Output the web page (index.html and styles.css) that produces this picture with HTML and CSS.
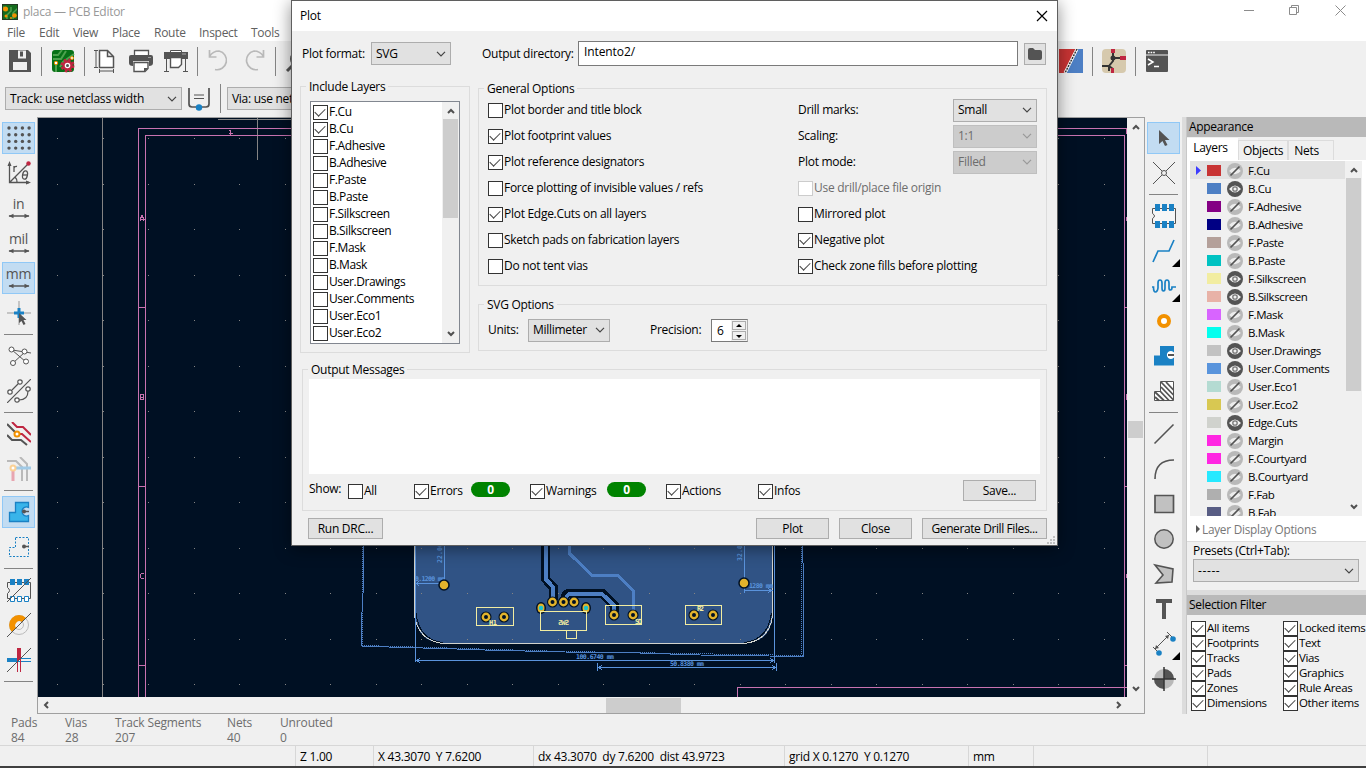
FILE: index.html
```html
<!DOCTYPE html>
<html lang="en">
<head>
<meta charset="utf-8">
<title>placa — PCB Editor</title>
<link rel="stylesheet" href="styles.css">
</head>
<body>
<svg class="defs" width="0" height="0">
  <symbol id="chev" viewBox="0 0 10 6"><path d="M1 .8 5 4.8 9 .8" fill="none" stroke="currentColor" stroke-width="1.2"/></symbol>
  <symbol id="arr" viewBox="0 0 8 6"><path d="M1 5 4 2 7 5" fill="none" stroke="#505050" stroke-width="2"/></symbol>
  <symbol id="eye" viewBox="0 0 16 16"><circle cx="8" cy="8" r="8" fill="#545454"/><path d="M2 8Q8 1 14 8 8 15 2 8Z" fill="#f0f0f0"/><circle cx="8" cy="8" r="2.2" fill="none" stroke="#777" stroke-width="1.3"/></symbol>
  <symbol id="noeye" viewBox="0 0 16 16"><circle cx="8" cy="8" r="8" fill="#b9b9b9"/><path d="M2.2 8Q8 1.5 13.8 8 8 14.500 2.200 8Z" fill="#ededed"/><path d="M3.500 12.500 12.500 3.500" stroke="#545454" stroke-width="1.7"/></symbol>
  <symbol id="dblarrow" viewBox="0 0 24 6"><path d="M1 3h22" stroke="#545454" stroke-width="1.6"/><path d="M1 3 6 .5v5ZM23 3 18 .5v5Z" fill="#545454"/></symbol>
</svg>
<div class="app">
  <header class="titlebar">
    <svg class="appicon" viewBox="0 0 16 16"><rect width="16" height="16" rx="1" fill="#146b1d"/><path d="M5 16V11L9 7V3M16 4 11 9V16M1 3 6 5" stroke="#4da24e" stroke-width="1.500" fill="none"/><g fill="#f29100"><circle cx="3.500" cy="5" r="2.500"/><circle cx="4" cy="12" r="1.500"/><circle cx="12.500" cy="11.500" r="2.300"/><circle cx="9" cy="14" r="1"/></g><rect x=".5" y=".5" width="15" height="15" fill="none" stroke="#233a23"/></svg>
    <span class="apptitle">placa — PCB Editor</span>
    <svg class="winctl" viewBox="0 0 104 14" fill="none" stroke="#8c8c8c"><path d="M1 7.500h10M46.500 4.500h7v7h-7zM48.500 4.500v-2h7v7h-2M92.500 2.500l10 10M102.500 2.500l-10 10"/></svg>
  </header>
  <nav class="menubar"><span>File</span><span>Edit</span><span>View</span><span>Place</span><span>Route</span><span>Inspect</span><span>Tools</span></nav>

  <div class="toolbar">
    <div class="tb"><svg viewBox="0 0 24 24"><path d="M1 1h19l3 3v19H1Z" fill="#545454"/><path d="M10 1.500h8v8h-8zM5 13h14v8H5z" fill="#f0f0f0"/><path d="M12 2.500h3v5h-3z" fill="#545454"/></svg></div>
    <i class="vsep"></i>
    <div class="tb"><svg viewBox="0 0 24 24"><rect x="1" y="1" width="22" height="22" rx="3" fill="#077117"/><path d="M2 6h5l4-5M2 10h8l5-8M9 18l3-5 11-8M5 14v9" stroke="#4da24e" stroke-width="2" fill="none"/><circle cx="5" cy="14" r="1.700" fill="#fff" stroke="#f29100"/><circle cx="21" cy="9" r="1.500" fill="#fff" stroke="#f29100"/><circle cx="16.500" cy="16.500" r="5.500" fill="none" stroke="#bf2641" stroke-width="3" stroke-dasharray="2.400 1.920"/><circle cx="16.500" cy="16.500" r="4" fill="#fff" stroke="#bf2641" stroke-width="2.400"/><circle cx="16.500" cy="16.500" r="1.500" fill="#545454"/></svg></div>
    <i class="vsep"></i>
    <div class="tb"><svg viewBox="0 0 24 24" fill="none" stroke="#545454"><path d="M5.500 1.500h8l6 6v11h-14zM13.500 1.500v6h6" fill="#fff" stroke-width="1.500"/><path d="M0 1.500h4M0 18.500h4M2 2v16M5.500 20v4M19.500 20v4M6 22h13"/></svg></div>
    <div class="tb"><svg viewBox="0 0 24 24"><path d="M5.500 6V1.500h14V6" fill="#fff" stroke="#545454" stroke-width="1.300"/><path d="M2 6h20q2 0 2 2v6q0 3-4 3V12H4v5Q0 17 0 14V8q0-2 2-2Z" fill="#545454"/><path d="M5 13.500h14v6l-3 3H5z" fill="#fff" stroke="#545454" stroke-width="1.400"/><path d="M15 23v-4h4" fill="#545454"/><path d="M19 8.500h3" stroke="#999"/></svg></div>
    <div class="tb"><svg viewBox="0 0 24 24"><path d="M6.500 4V1.500h11V4" fill="#fff" stroke="#545454"/><path d="M0 3h24v7H0z" fill="#545454"/><path d="M18 5h4" stroke="#aaa"/><path d="M2.500 10v12M21.500 10v12M0 22.500h5M19 22.500h5" stroke="#545454"/><path d="M6.500 8.500h11v7l-3 3h-8z" fill="#fff" stroke="#545454" stroke-width="1.400"/></svg></div>
    <i class="vsep"></i>
    <div class="tb"><svg viewBox="0 0 24 24" fill="none" stroke="#b9b9b9" stroke-width="1.700"><path d="M2.500 1v7h7M2.500 7.500Q6 2 12 2a9 9 0 1 1-4 18.500"/></svg></div>
    <div class="tb"><svg viewBox="0 0 24 24" fill="none" stroke="#b9b9b9" stroke-width="1.700"><path d="M21.500 1v7h-7M21.500 7.500Q18 2 12 2a9 9 0 1 0 4 18.500"/></svg></div>
    <i class="vsep"></i>
    <div class="tb"><svg viewBox="0 0 24 24" fill="none" stroke="#545454"><circle cx="14" cy="10" r="8" stroke-width="2"/><path d="M8 16l-6 6" stroke-width="3"/></svg></div>
    <span class="grow"></span>
    <div class="tb"><svg viewBox="0 0 24 24"><path d="M0 0h24v24H0z" fill="#4d7fc4"/><path d="M0 0h18L6 24H0z" fill="#c83434"/><path d="M18 0 6 24" stroke="#fff" stroke-width="3"/><path d="M18 0 6 24" stroke="#333" stroke-width="1.500" stroke-dasharray="2 1"/></svg></div>
    <i class="vsep"></i>
    <div class="tb"><svg viewBox="0 0 24 24"><rect width="24" height="24" rx="4" fill="#d6c9ad"/><path d="M11 2v10L7 17v5M11 9h8M0 17h7M7 17l4 3" stroke="#333" stroke-width="2" fill="none"/><circle cx="11" cy="9" r="2.500" fill="#333"/><path d="M9 0h4v4H9zM18 7h6v4h-6zM9 19h3v5H9z" fill="#bf2641"/></svg></div>
    <i class="vsep"></i>
    <div class="tb"><svg viewBox="0 0 24 24"><rect x="1" y="1" width="22" height="22" rx="1" fill="#545454"/><path d="M1 6h22" stroke="#f0f0f0"/><path d="M3 3.500h7" stroke="#fff" stroke-width="1.600" stroke-dasharray="1.600 1"/><path d="M3 10l5 3-5 3M9 17.500h5" fill="none" stroke="#fff" stroke-width="1.500"/></svg></div>
  </div>
  <div class="toolbar2">
    <div class="select track"><span>Track: use netclass width</span><svg><use href="#chev"/></svg></div>
    <svg class="tw" viewBox="0 0 24 24"><path d="M2 1v16q0 3 3 3h14q3 0 3-3V1" fill="none" stroke="#545454" stroke-width="1.700"/><path d="M7 8h10M7 11.500h10" stroke="#545454" stroke-width="1.200"/><circle cx="12" cy="20.500" r="3.200" fill="#1a81c4"/></svg>
    <i class="vsep"></i>
    <div class="select via"><span>Via: use net</span></div>
  </div>

  <main class="work">
    <aside class="side">
      <div class="tb on"><svg viewBox="0 0 24 24" id="gridicon"></svg></div>
      <div class="tb"><svg viewBox="0 0 24 24" fill="none" stroke="#545454" stroke-width="1.300"><path d="M2.500 3v18.500H22M2.500 21.500 21 3M8 16q2 2 2 5"/><path d="M.5 5 2.500 0l2 5zM19 19.500l5 2-5 2z" fill="#545454" stroke="none"/><circle cx="21.500" cy="2.500" r="2.200" fill="#bf2641" stroke="none"/><path d="M7 11V5M7 7q1-2 3-1.500"/><ellipse cx="18" cy="14" rx="2.400" ry="4.200" transform="rotate(12 18 14)"/><path d="M15.500 14h5"/></svg></div>
      <div class="tb unit"><b>in</b><svg><use href="#dblarrow"/></svg></div>
      <div class="tb unit"><b>mil</b><svg><use href="#dblarrow"/></svg></div>
      <div class="tb unit on"><b>mm</b><svg><use href="#dblarrow"/></svg></div>
      <div class="tb"><svg viewBox="0 0 24 24"><path d="M12 0v24M0 12h24" stroke="#999"/><path d="M12 7v10M7 12h10" stroke="#1a81c4" stroke-width="3"/><path d="M12 12v10l2.500-2 2 4 2-1-2-4h3Z" fill="#545454"/></svg></div>
      <i class="hsep"></i>
      <div class="tb"><svg viewBox="0 0 24 24" fill="#fff" stroke="#545454"><path d="M5 6l14 12M5 6l13 2 6 1M6 19 18 8"/><circle cx="4.500" cy="5.500" r="2.500"/><circle cx="17.500" cy="7.500" r="2.500"/><circle cx="6" cy="19" r="2.500"/><circle cx="19" cy="17.500" r="2.500"/></svg></div>
      <div class="tb"><svg viewBox="0 0 24 24" fill="none" stroke="#545454" stroke-width="1.200"><path d="M0 24 24 0M5 11l6-6M12 21q9 0 9-9"/><g fill="#fff"><circle cx="3" cy="13" r="2.200"/><circle cx="13" cy="3" r="2.200"/><circle cx="21" cy="10" r="2.200"/><circle cx="10" cy="21" r="2.200"/></g></svg></div>
      <i class="hsep"></i>
      <div class="tb"><svg viewBox="0 0 24 24" fill="none" stroke-width="2"><path d="M0 2l9 9M0 13l5 5h9l6 5" stroke="#545454"/><path d="M5 0l5 5h6l8 8M10 12h5l9 8" stroke="#bf2641"/><circle cx="10" cy="12" r="2.500" fill="#fff" stroke="#f29100"/></svg></div>
      <div class="tb"><svg viewBox="0 0 24 24" fill="none" stroke-width="2"><path d="M0 4h9l6 6v14M13 0l7 7v17" stroke="#b9b9b9"/><path d="M6 11v13" stroke="#e8a5b0" stroke-width="3"/><path d="M7 11h17" stroke="#a1cae6" stroke-width="3"/><circle cx="6" cy="11" r="2.500" fill="#fff" stroke="#fbd195"/></svg></div>
      <i class="hsep"></i>
      <div class="tb on"><svg viewBox="0 0 24 24"><path d="M8.500 2.500h13v5a4.500 4.500 0 1 0 0 8v6h-19v-9h6Z" fill="#39b4ea" stroke="#1a81c4" stroke-width="1.300"/><circle cx="17" cy="11.500" r="2" fill="#545454"/><path d="M17 11.500h5" stroke="#545454" stroke-width="1.500"/></svg></div>
      <div class="tb"><svg viewBox="0 0 24 24"><path d="M8.500 2.500h13v19h-19v-9h6Z" fill="none" stroke="#1a81c4" stroke-dasharray="2 1.500"/><circle cx="17" cy="11.500" r="2" fill="#545454"/><path d="M17 11.500h5" stroke="#545454" stroke-width="1.500"/></svg></div>
      <i class="hsep"></i>
      <div class="tb"><svg viewBox="0 0 24 24"><path d="M.5 4.500h23v16H.5v-5q4-3 0-6z" fill="none" stroke="#545454"/><path d="M3 1h5v6H3zM10 1h5v6h-5zM17 1h5v6h-5z" fill="#1a81c4"/><path d="M3.500 18.500h4v5h-4zM10.500 18.500h4v5h-4zM17.500 18.500h4v5h-4z" fill="#fff" stroke="#1a81c4"/><path d="M0 24 24 0" stroke="#545454"/></svg></div>
      <div class="tb"><svg viewBox="0 0 24 24" fill="none"><circle cx="12" cy="12" r="9.500" stroke="#bbb"/><circle cx="12" cy="12" r="4.500" stroke="#bbb"/><path d="M5 19A9.700 9.700 0 0 1 19 5l-4 4a4.300 4.300 0 0 0-6 6Z" fill="#f29100"/><path d="M0 24 24 0" stroke="#545454"/></svg></div>
      <div class="tb"><svg viewBox="0 0 24 24"><path d="M0 12h12" stroke="#1a81c4" stroke-width="4"/><path d="M12 10.500h12M12 13.500h12" stroke="#1a81c4"/><path d="M12 0v12" stroke="#bf2641" stroke-width="4"/><path d="M10.500 12v12M13.500 12v12" stroke="#bf2641"/><path d="M0 24 24 0" stroke="#545454"/></svg></div>
      <i class="hsep"></i>
    </aside>

    <section class="view">
      <svg class="canvas" viewBox="38 118 1089 579" shape-rendering="crispEdges">
        <rect x="38" y="118" width="1089" height="579" fill="#001023"/>
        <path d="M102.500 118V697M218 119.500h80M257.500 118v42" stroke="#848484" fill="none"/>
        <g fill="none" stroke="#c872b0">
          <path d="M138.500 697V128.500H1127M145.500 697V135.500H1124.500V697M138 307.500h8M138 486.500h8M138 665.500h8M1124 307.500h3M1124 486.500h3M1124 665.500h3M737.500 697v-9.500H1127M1126.500 128v6M1126.500 217v4M1126.500 394v6M1126.500 574v4"/>
          <path d="M229 130.500h1.500v4M229 133.500h4M140.500 221v-3l1-1v-2h1v2l1 1v3M140.500 219.500h4M140.500 394.500h3v5h-3zM140.500 397h3M144 573.500h-2.500l-1 1v3l1 1h2.500"/>
        </g>
        <path d="M415 540H773V616Q770 643 744 643H443Q418 643 415 616Z" fill="#305385"/>
        <g id="dots" fill="#848484"></g>
        <path d="M414.500 540v76Q419 641 443 643.500H744Q769 641 772.500 616V540" fill="none" stroke="#d0d2cd"/>
        <path d="M416 613Q419 640 443 642.500M771.500 613Q768 640 744 642.500" fill="none" stroke="#001023"/>
        <g fill="none" stroke="#4d7fc4">
          <path d="M363.500 540V584L361.500 622V646L402 647.500 443 648.500 484 650 565 652 640 653 700 655 803.500 656.500V585L802.500 540"/>
          <path d="M362 545V645M362 645.500 565 651.500 803 655.500M801.500 545v110" stroke-dasharray="1 1"/>
        </g>
        <path d="M545.500 540V579L553 587V600M564 600q2-7 5-7H602L614 605v7" fill="none" stroke="#001023" stroke-width="9"/>
        <path d="M545.500 540V579L553 587V600M565 601q2-7 5-7H602L614 605v7" fill="none" stroke="#4d7fc4" stroke-width="4"/>
        <path d="M569 540v13L592 575.500h26L633.500 591v22" fill="none" stroke="#4d7fc4" stroke-width="3"/>
        <g fill="none" stroke="#5a93dc">
          <path d="M415.500 545V662M444.500 540v44M415 583.500h28M744.500 540v42M774.500 540V663M744 590.500h29M416 660.500h358M598 667.500h179M597.500 663v8M776.500 663v8M744.500 588v5M416 660.500l4-2M416 660.500l4 2M774 660.500l-4-2M774 660.500l-4 2M598 667.500l4-2M598 667.500l4 2M776 667.500l-4-2M776 667.500l-4 2M416 583.500l3-2M416 583.500l3 2M772 590.500l-4-2M772 590.500l-4 2"/>
        </g>
        <g class="dim" shape-rendering="auto">
          <text x="415" y="581" textLength="30">0.1200 mm</text>
          <text x="749" y="588" textLength="24">1280 mm</text>
          <text x="576" y="659" textLength="38">100.6740 mm</text>
          <text x="670" y="666" textLength="34">50.8380 mm</text>
          <text transform="translate(442 563) rotate(-90)" textLength="20">22.00</text>
          <text transform="translate(742 561) rotate(-90)" textLength="20">32.00</text>
        </g>
        <g shape-rendering="auto" stroke="#001023" stroke-width="1.500" fill="#e2b32c">
          <circle cx="444" cy="585" r="5"/><circle cx="744" cy="583" r="5"/>
        </g>
        <g id="pads" shape-rendering="auto"></g>
        <g fill="none" stroke="#f2eda1">
          <path d="M476.500 607.500h37v18h-37zM540.500 611.500h46v19h-46zM566.500 630.500h10v8h-10zM605.500 605.500h36v19h-36zM685.500 605.500h36v19h-36z"/>
        </g>
        <g class="silk" shape-rendering="auto">
          <text x="489" y="625" textLength="8">H1</text><text transform="translate(569 625) scale(-1 1)" textLength="11">SW5</text>
          <text x="635" y="624" textLength="7">SQ</text><text x="697" y="611" textLength="7">R2</text>
        </g>
      </svg>
      <div class="vscroll"><svg class="ar"><use href="#arr"/></svg><i></i><svg class="ar down"><use href="#arr"/></svg></div>
      <div class="hscroll"><svg class="ar toleft"><use href="#arr"/></svg><i></i><svg class="ar toright"><use href="#arr"/></svg></div>
    </section>

    <aside class="side">
      <div class="tb on"><svg viewBox="0 0 24 24"><path d="M7 4v14l3.500-3 2.500 5 2.500-1L13 14h4.500Z" fill="#545454"/></svg></div>
      <div class="tb"><svg viewBox="0 0 24 24" fill="none" stroke="#545454"><path d="M1 1l9 9M23 1l-9 9M1 23l9-9M23 23l-9-9"/><circle cx="12" cy="12" r="2.500"/></svg></div>
      <i class="hsep"></i>
      <div class="tb"><svg viewBox="0 0 24 24"><path d="M.5 4.500h23v15H.5v-5q4-2.500 0-5z" fill="#f6f6f6" stroke="#545454"/><path d="M3 0h5v7H3zM10 0h5v7h-5zM17 0h5v7h-5zM3 17h5v7H3zM10 17h5v7h-5zM17 17h5v7h-5z" fill="#1a81c4"/></svg></div>
      <div class="tb fly"><svg viewBox="0 0 24 24" fill="none" stroke="#1a81c4" stroke-width="1.700"><path d="M1 23 6 12h11l5-11"/></svg></div>
      <div class="tb fly"><svg viewBox="0 0 24 24" fill="none" stroke="#1a81c4" stroke-width="1.700"><path d="M0 13h1.500q0 5 2 5T6 14V9q0-3 2-3t2 3v5q0 3 1.500 3T13 14V9q0-3 2-3t2 3v5q0 2 1.500 2t1.500-3h4"/></svg></div>
      <div class="tb"><svg viewBox="0 0 24 24"><circle cx="12" cy="12" r="5" fill="#fff" stroke="#f29100" stroke-width="4"/></svg></div>
      <div class="tb"><svg viewBox="0 0 24 24"><path d="M8 2h14v19.500H2v-10h6z" fill="#1a81c4"/><path d="M22 8.500a4 4 0 1 0 0 5z" fill="#fff"/><path d="M16 11h6" stroke="#545454" stroke-width="2"/></svg></div>
      <div class="tb"><svg viewBox="0 0 24 24"><path d="M8.500 2.500h13v19h-19v-9h6Z" fill="#fff" stroke="#545454"/><path d="M3 18l4 3.500M3 13l9 8.500M8 12l9 9.500M9 8l12.500 13M9 3l12.500 13M14 3l7.500 8" stroke="#545454" stroke-width="1.800"/></svg></div>
      <i class="hsep"></i>
      <div class="tb"><svg viewBox="0 0 24 24"><path d="M2.500 21.500l19-19" stroke="#545454" stroke-width="1.600"/></svg></div>
      <div class="tb"><svg viewBox="0 0 24 24"><path d="M3 22Q3 3 22 3" fill="none" stroke="#545454" stroke-width="1.600"/></svg></div>
      <div class="tb"><svg viewBox="0 0 24 24"><path d="M3 3.500h18.500v17H3z" fill="#c1c1c1" stroke="#545454" stroke-width="1.700"/></svg></div>
      <div class="tb"><svg viewBox="0 0 24 24"><circle cx="12" cy="12" r="9.200" fill="#c1c1c1" stroke="#545454" stroke-width="1.500"/></svg></div>
      <div class="tb"><svg viewBox="0 0 24 24"><path d="M3 3l18 4-1 13-16 1 7-8Z" fill="#c1c1c1" stroke="#545454" stroke-width="1.600"/></svg></div>
      <div class="tb"><svg viewBox="0 0 24 24"><path d="M4 2h16v4h-6v16h-4V6H4z" fill="#545454"/></svg></div>
      <div class="tb fly"><svg viewBox="0 0 24 24"><path d="M1 15l5 5M15 0l5 5M3 17 17 3" stroke="#545454"/><path d="M3 17l1-4 3 3zM17 3l-1 4-3-3z" fill="#545454"/><circle cx="7" cy="21" r="2.800" fill="#1a81c4"/><circle cx="21" cy="7" r="2.800" fill="#1a81c4"/></svg></div>
      <div class="tb"><svg viewBox="0 0 24 24"><circle cx="12" cy="12" r="10" fill="#b9b9b9"/><path d="M12 12V2A10 10 0 0 1 22 12zM12 12v10A10 10 0 0 1 2 12z" fill="#545454"/><path d="M12 0v24M0 12h24" stroke="#333" stroke-width="1.500"/></svg></div>
    </aside>

    <aside class="panel">
      <h2>Appearance</h2>
      <div class="tabs"><span class="sel">Layers</span><span>Objects</span><span>Nets</span></div>
      <div class="layerbox">
        <div class="layers" id="layers"></div>
        <div class="lscroll"><svg class="ar"><use href="#arr"/></svg><i></i><svg class="ar down"><use href="#arr"/></svg></div>
      </div>
      <div class="ldo"><svg viewBox="0 0 4 8"><path d="M0 0l4 4-4 4z" fill="#555"/></svg>Layer Display Options</div>
      <div class="presets"><span>Presets (Ctrl+Tab):</span><div class="select"><span>-----</span><svg><use href="#chev"/></svg></div></div>
      <h2>Selection Filter</h2>
      <div class="filter" id="filter"></div>
    </aside>
  </main>

  <section class="info">
    <div class="i1">Pads<br>84</div><div class="i2">Vias<br>28</div><div class="i3">Track Segments<br>207</div><div class="i4">Nets<br>40</div><div>Unrouted<br>0</div>
  </section>
  <footer class="status"><span class="s0"></span><span class="s1">Z 1.00</span><span class="s2">X 43.3070&nbsp; Y 7.6200</span><span class="s3">dx 43.3070&nbsp; dy 7.6200&nbsp; dist 43.9723</span><span class="s4">grid X 0.1270&nbsp; Y 0.1270</span><span class="s5">mm</span><span class="s6"></span><span class="s7"></span></footer>
</div>

<div class="dialog">
  <div class="dtitle"><span>Plot</span><svg viewBox="0 0 12 12"><path d="M1 1l10 10M11 1 1 11" stroke="#000" stroke-width="1.200"/></svg></div>
  <div class="top">
    <span class="l1">Plot format:</span><div class="select fmt"><span>SVG</span><svg><use href="#chev"/></svg></div>
    <span class="l2">Output directory:</span><div class="input">Intento2/</div>
    <div class="browse"><svg viewBox="0 0 14 12"><path d="M0 2Q0 0 2 0h3l2 2h5q2 0 2 2v6q0 2-2 2H2Q0 12 0 10Z" fill="#545454"/></svg></div>
  </div>
  <div class="cols">
    <div class="group include"><div class="gt">Include Layers</div>
      <div class="list"><div class="items" id="plotlayers"></div><div class="lscroll"><svg class="ar"><use href="#arr"/></svg><i></i><svg class="ar down"><use href="#arr"/></svg></div></div>
    </div>
    <div class="settings">
      <div class="group general"><div class="gt">General Options</div>
        <div class="opts">
          <div class="ocol">
            <label class="ck">Plot border and title block</label><label class="ck on">Plot footprint values</label><label class="ck on">Plot reference designators</label><label class="ck">Force plotting of invisible values / refs</label><label class="ck on">Plot Edge.Cuts on all layers</label><label class="ck">Sketch pads on fabrication layers</label><label class="ck">Do not tent vias</label>
          </div>
          <div class="ocol">
            <div class="orow"><span>Drill marks:</span><div class="select"><span>Small</span><svg><use href="#chev"/></svg></div></div>
            <div class="orow"><span>Scaling:</span><div class="select off"><span>1:1</span><svg><use href="#chev"/></svg></div></div>
            <div class="orow"><span>Plot mode:</span><div class="select off"><span>Filled</span><svg><use href="#chev"/></svg></div></div>
            <label class="ck off">Use drill/place file origin</label><label class="ck">Mirrored plot</label><label class="ck on">Negative plot</label><label class="ck on">Check zone fills before plotting</label>
          </div>
        </div>
      </div>
      <div class="group svgopt"><div class="gt">SVG Options</div>
        <div class="srow"><span class="u">Units:</span><div class="select mmsel"><span>Millimeter</span><svg><use href="#chev"/></svg></div><span class="p">Precision:</span><div class="spin"><span>6</span><div><i class="up"></i><i class="dn"></i></div></div></div>
      </div>
    </div>
  </div>
  <div class="group output"><div class="gt">Output Messages</div>
    <div class="msgs"></div>
    <div class="show"><span class="sh">Show:</span><label class="ck a">All</label><label class="ck on b">Errors</label><span class="badge">0</span><label class="ck on c">Warnings</label><span class="badge">0</span><label class="ck on d">Actions</label><label class="ck on e">Infos</label><div class="btn save">Save...</div></div>
  </div>
  <div class="btns"><div class="btn drc">Run DRC...</div><span class="grow"></span><div class="btn plot">Plot</div><div class="btn plot">Close</div><div class="btn gen">Generate Drill Files...</div></div>
  <svg class="grip" viewBox="0 0 8 8"><path d="M6 0h2v2H6zM6 3h2v2H6zM6 6h2v2H6zM3 3h2v2H3zM3 6h2v2H3zM0 6h2v2H0z" fill="#bfbfbf"/></svg>
</div>
<script src="app.js"></script>
</body>
</html>
```
FILE: styles.css
```css
* { box-sizing: border-box; }
body { margin: 0; width: 1366px; height: 768px; overflow: hidden; position: relative; background: #f0f0f0; font: 12px/16px "Open Sans", "Noto Sans", sans-serif; letter-spacing: -0.28px; color: #000; }
span, label { white-space: nowrap; }
i { font-style: normal; display: block; }
svg { display: block; flex: none; }
.defs { position: absolute; }
.grow { flex: 1; }
.app { display: flex; flex-direction: column; width: 1366px; height: 768px; }
.titlebar { display: flex; align-items: center; height: 23px; background: #fff; padding: 0 19px 0 2px; color: #999; flex: none; }
.appicon { width: 16px; height: 16px; margin-right: 5px; }
.apptitle { flex: 1; padding-top: 1px; }
.winctl { width: 104px; height: 14px; margin-bottom: 3px; }
.menubar { display: grid; grid-template-columns: 32px 34px 39px 42px 45px 52px 60px; height: 18px; padding-left: 7px; background: #fff; color: #606060; line-height: 20px; flex: none; }
.toolbar { display: flex; align-items: center; gap: 3px; height: 40px; padding: 0 193px 0 4px; flex: none; }
.tb { width: 32px; height: 32px; display: flex; align-items: center; justify-content: center; flex: none; position: relative; }
.tb > svg { width: 24px; height: 24px; }
.vsep { width: 5px; height: 29px; background: linear-gradient(#848484, #848484) 2px 0 / 1px 100% no-repeat; flex: none; }
.toolbar2 { display: flex; align-items: center; height: 36px; padding: 0 0 1px 5px; flex: none; }
.select { display: flex; align-items: center; justify-content: space-between; height: 23px; border: 1px solid #adadad; background: #e1e1e1; padding: 0 4px; color: #000; }
.select svg { width: 10px; height: 6px; color: #444; }
.select.off { background: #ccc; border-color: #bfbfbf; color: #6d6d6d; }
.select.off svg { color: #999; }
.track { width: 177px; letter-spacing: -0.2px; }
.tw { width: 24px; height: 24px; margin: 0 7px 0 5px; }
.via { width: 177px; margin-left: 4px; }
.work { display: flex; height: 597px; flex: none; }
.side { width: 37px; padding: 5px 2px 0; display: flex; flex-direction: column; gap: 3px; flex: none; }
.side .tb { width: 33px; }
.tb.on { background: #c2dcf2; box-shadow: inset 0 0 0 1px #90c8f6; }
.tb.unit { flex-direction: column; }
.tb.unit b { font: 500 14px/14px "Open Sans", sans-serif; color: #545454; letter-spacing: -0.3px; }
.tb.unit svg { width: 22px; height: 6px; margin-top: 2px; }
.hsep { height: 5px; width: 29px; margin-left: 2px; background: linear-gradient(#848484, #848484) 0 2px / 100% 1px no-repeat; flex: none; }
.tb.fly::after { content: ""; position: absolute; right: 0; bottom: 0; border: 4px solid #000; border-left-color: transparent; border-top-color: transparent; }
.view { width: 1108px; height: 597px; border: 1px solid #a0a0a0; display: grid; grid-template: 579px 16px / 1089px 17px; flex: none; background: #f0f0f0; }
.canvas { width: 1089px; height: 579px; }
.dim { font: bold 6.5px "DejaVu Sans Mono", monospace; fill: #5a93dc; letter-spacing: 0; }
.silk { font: bold 7px "DejaVu Sans Mono", monospace; fill: #f2eda1; letter-spacing: 0; }
.vscroll { display: flex; flex-direction: column; align-items: center; justify-content: space-between; padding: 6px 0 5px; }
.vscroll i { width: 15px; height: 17px; background: #cdcdcd; margin-top: 42px; }
.hscroll { display: flex; align-items: center; justify-content: space-between; padding: 0 4px; }
.hscroll i { width: 75px; height: 15px; background: #cdcdcd; margin-left: 121px; }
.ar { width: 8px; height: 6px; }
.ar.down { transform: rotate(180deg); }
.ar.toleft { transform: rotate(-90deg); }
.ar.toright { transform: rotate(90deg); }
.panel { margin-left: 4px; width: 180px; border-left: 1px solid #c8c8c8; box-shadow: -4px 0 #dcdcdc; }
.panel h2 { margin: 0; height: 20px; background: #b9b9b9; font: inherit; line-height: 20px; padding-left: 2px; letter-spacing: -0.3px; }
.tabs { display: flex; height: 23px; align-items: flex-end; background: #f0f0f0; }
.tabs span { height: 20px; border: 1px solid #dcdcdc; border-bottom: 0; line-height: 19px; width: 50px; text-align: center; }
.tabs span.sel { height: 22px; background: #fff; width: 51px; border-color: #fff; line-height: 18px; padding-right: 4px; }
.tabs span:last-child { width: 46px; padding-right: 9px; }
.layerbox { display: flex; height: 356px; border: solid #fff; border-width: 1px 4px 0 3px; }
.layers { width: 155px; height: 355px; overflow: hidden; font-size: 11.5px; letter-spacing: -0.4px; }
.lrow { display: flex; align-items: center; height: 18px; }
.lrow.cur { background: #e1e1e1; }
.lrow > span:last-child { padding-top: 2px; }
.lrow .mark { width: 17px; padding-left: 6px; }
.lrow .mark svg { width: 5px; height: 9px; }
.lrow .sw { width: 14px; height: 11px; margin-right: 6px; }
.lrow > svg { width: 16px; height: 16px; margin: 1px 5px 0 0; }
.filter { font-size: 11.5px; letter-spacing: -0.35px; }
.lscroll { width: 17px; display: flex; flex-direction: column; align-items: center; padding: 6px 0; }
.lscroll i { width: 15px; background: #cdcdcd; margin-top: 5px; }
.lscroll .down { margin-top: auto; }
.panel .lscroll i { height: 213px; }
.ldo { display: flex; align-items: center; gap: 2px; height: 26px; background: #fff; color: #777; border-bottom: 1px solid #dcdcdc; padding-left: 9px; letter-spacing: -0.25px; font-size: 11.8px; }
.ldo svg { width: 4px; height: 8px; }
.presets { height: 48px; padding: 0 7px 0 6px; }
.presets > span { display: block; height: 17px; line-height: 17px; }
.presets .select { letter-spacing: 0.6px; }
.panel h2:nth-of-type(2) { margin-top: 5px; box-shadow: 0 -5px #dcdcdc; }
.filter { display: grid; grid-template-columns: 92px 90px; grid-auto-rows: 15px; padding: 5px 0 0 4px; }
.info { height: 32px; display: flex; padding: 1px 0 0 11px; color: #6d6d6d; line-height: 15px; letter-spacing: -0.15px; border-bottom: 1px solid #d7d7d7; flex: none; }
.i1 { width: 54px; } .i2 { width: 50px; } .i3 { width: 112px; } .i4 { width: 53px; }
.status { display: flex; height: 22px; line-height: 19px; border-bottom: 2px solid #3f3f3f; letter-spacing: -0.25px; flex: none; }
.status span { border-left: 1px solid #d7d7d7; padding: 1px 0 0 4px; }
.status .s0 { width: 295px; border: 0; } .s1 { width: 78px; } .s2 { width: 160px; } .s3 { width: 251px; } .s4 { width: 184px; } .s5 { width: 65px; } .s6 { width: 174px; } .s7 { width: 159px; }

.dialog { position: absolute; left: 291px; top: 0; width: 767px; height: 546px; border: 1px solid #5f5f5f; background: #f0f0f0; box-shadow: 0 3px 16px rgba(0, 0, 0, .45); }
.dtitle { height: 30px; background: #fff; display: flex; align-items: center; justify-content: space-between; padding: 0 9px 0 8px; }
.dtitle svg { width: 12px; height: 12px; margin-bottom: 1px; }
.top { height: 45px; display: flex; align-items: center; }
.l1 { width: 69px; margin-left: 10px; }
.fmt { width: 80px; }
.l2 { width: 96px; margin-left: 31px; }
.input { width: 440px; height: 25px; background: #fff; border: 1px solid #7a7a7a; padding: 2px 5px; letter-spacing: -0.1px; }
.browse { width: 22px; height: 22px; margin-left: 6px; border: 1px solid #adadad; background: #e1e1e1; display: flex; align-items: center; justify-content: center; }
.browse svg { width: 14px; height: 12px; }
.cols { display: flex; height: 277px; padding-left: 8px; gap: 8px; }
.group { border: 1px solid #dcdcdc; }
.gt { width: fit-content; height: 18px; margin: -9px 0 0 5px; padding: 0 3px; background: #f0f0f0; line-height: 17px; }
.include { width: 170px; height: 267px; margin-top: 10px; }
.list { width: 150px; height: 243px; margin: 5px 0 0 9px; border: 1px solid #828790; background: #fff; display: flex; }
.items { flex: 1; padding: 1px 0 0 2px; overflow: hidden; letter-spacing: -0.4px; }
.items .ck { height: 17px; }
.list .lscroll { background: #f0f0f0; }
.list .lscroll i { height: 99px; }
.settings { width: 569px; }
.general { height: 198px; margin-top: 12px; }
.opts { display: flex; margin: -1px 0 0 9px; }
.ocol { width: 310px; display: flex; flex-direction: column; }
.ocol:last-child { width: 242px; }
.ck { display: flex; align-items: center; height: 26px; position: relative; padding-left: 16px; }
.ck::before { content: ""; position: absolute; left: 0; top: calc(50% - 7px); width: 13px; height: 13px; border: 1px solid #333; background: #fff; }
.ck.on::after { content: ""; position: absolute; left: 2px; top: calc(50% - 4px); width: 9px; height: 5px; border: solid #444; border-width: 0 0 1.500px 1.500px; transform: rotate(-45deg); }
.items .ck::before, .filter .ck::before { top: calc(50% - 6.5px); }
.items .ck::after, .filter .ck::after { top: calc(50% - 3.5px); }
.ck.off { color: #6d6d6d; }
.ck.off::before { border-color: #ccc; }
.orow { height: 26px; display: flex; align-items: center; }
.orow > span { width: 155px; padding-bottom: 1px; }
.orow .select { width: 84px; }
.svgopt { height: 47px; margin-top: 18px; }
.srow { display: flex; align-items: center; height: 32px; padding-left: 9px; }
.u { width: 40px; }
.mmsel { width: 82px; }
.p { width: 61px; margin-left: 40px; }
.spin { width: 37px; height: 23px; border: 1px solid #7a7a7a; border-right-color: #adadad; background: #fff; display: flex; padding-left: 5px; justify-content: space-between; line-height: 21px; }
.spin div { width: 16px; background: #f0f0f0; display: flex; flex-direction: column; gap: 1px; padding: 1px; }
.spin i { flex: 1; border: 1px solid #adadad; position: relative; }
.spin i::after { content: ""; position: absolute; left: 3px; top: 2px; border: 3px solid transparent; border-top-width: 0; border-bottom-color: #000; }
.spin i.dn::after { transform: scaleY(-1); top: 3px; }
.output { width: 745px; height: 142px; margin: 16px 0 0 10px; }
.msgs { height: 95px; background: #fff; margin: 0 6px; }
.show { display: flex; align-items: center; height: 32px; padding-left: 6px; }
.sh { width: 39px; padding-bottom: 2px; }
.show .ck { padding-top: 1px; }
.show .ck::before { top: 7px; }
.show .ck::after { top: 10px; }
.a { width: 66px; } .b { width: 57px; } .c { width: 77px; margin-left: 20px; } .d { width: 92px; margin-left: 20px; } .e { flex: 1; }
.badge { width: 39px; height: 15px; border-radius: 8px; background: #008300; color: #fff; font: bold 12px/15px "Open Sans", sans-serif; text-align: center; margin-bottom: 1px; }
.btn { height: 21px; border: 1px solid #adadad; background: #e1e1e1; text-align: center; line-height: 20px; }
.save { width: 73px; margin-right: 10px; }
.btns { display: flex; margin-top: 7px; padding: 0 10px 0 16px; gap: 10px; }
.drc { width: 75px; } .plot { width: 73px; } .gen { width: 125px; letter-spacing: -0.4px; }
.grip { position: absolute; right: 2px; bottom: 1px; width: 8px; height: 8px; }
```
FILE: app.js
```js
const byId = id => document.getElementById(id);

const layers = [
  ["F.Cu", "#c83434", 0], ["B.Cu", "#4d7fc4", 1], ["F.Adhesive", "#840084", 0], ["B.Adhesive", "#000084", 0],
  ["F.Paste", "#b4a09a", 0], ["B.Paste", "#00c2c2", 0], ["F.Silkscreen", "#f2eda1", 1], ["B.Silkscreen", "#e8b2a7", 1],
  ["F.Mask", "#d864ff", 0], ["B.Mask", "#02ffee", 0], ["User.Drawings", "#c2c2c2", 1], ["User.Comments", "#5994dc", 1],
  ["User.Eco1", "#b4dbd2", 0], ["User.Eco2", "#d8c852", 0], ["Edge.Cuts", "#d0d2cd", 1], ["Margin", "#ff26e2", 0],
  ["F.Courtyard", "#ff26e2", 0], ["B.Courtyard", "#26e9ff", 0], ["F.Fab", "#afafaf", 0], ["B.Fab", "#585d84", 0]
];
byId("layers").innerHTML = layers.map(([name, color, visible], i) =>
  `<div class="lrow${i ? "" : " cur"}"><span class="mark">${i ? "" : '<svg viewBox="0 0 5 9"><path d="M0 0l5 4.500L0 9z" fill="#3c3cff"/></svg>'}</span>` +
  `<i class="sw" style="background:${color}"></i><svg><use href="#${visible ? "eye" : "noeye"}"/></svg><span>${name}</span></div>`).join("");
byId("plotlayers").innerHTML = layers.slice(0, 10).map(l => l[0])
  .concat("User.Drawings", "User.Comments", "User.Eco1", "User.Eco2")
  .map((name, i) => `<label class="ck${i < 2 ? " on" : ""}">${name}</label>`).join("");
byId("filter").innerHTML = ["All items", "Locked items", "Footprints", "Text", "Tracks", "Vias", "Pads", "Graphics", "Zones", "Rule Areas", "Dimensions", "Other items"]
  .map(name => `<label class="ck on" style="height:15px">${name}</label>`).join("");

let dots = "";
for (let c = 0; c < 24; c++)
  for (let r = 0; r < 13; r++)
    dots += `<rect x="${Math.round(57 + c * 45.5)}" y="${Math.round(138 + r * 45.5)}" width="1" height="1"/>`;
byId("dots").innerHTML = dots;

let grid = "";
for (let y = 0; y < 4; y++)
  for (let x = 0; x < 4; x++)
    grid += `<circle cx="${2 + x * 6.7}" cy="${2 + y * 6.7}" r="1.700" fill="#545454"/>`;
byId("gridicon").innerHTML = grid;

const ring = ([x, y]) => `<circle cx="${x}" cy="${y}" r="5.500" fill="#001023"/><circle cx="${x}" cy="${y}" r="3.200" fill="#001023" stroke="#e2b32c" stroke-width="2.400"/>`;
const mount = ([x, y]) => `<ellipse cx="${x}" cy="${y}" rx="5" ry="6" fill="#001023"/><ellipse cx="${x}" cy="${y}" rx="3.500" ry="4.500" fill="#e2b32c"/><circle cx="${x}" cy="${y}" r="2.200" fill="#1ac4d2"/>`;
byId("pads").innerHTML =
  [[486, 617], [504, 617], [552.5, 602], [563.5, 602], [574, 602], [614, 615], [633, 615], [694, 615], [713, 615]].map(ring).join("") +
  [[541, 608], [586, 608]].map(mount).join("");
```
